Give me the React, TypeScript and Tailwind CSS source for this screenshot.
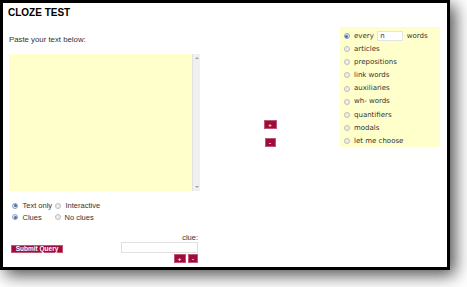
import React from "react";

function Radio({ on }: { on?: boolean }) {
  return (
    <span
      className={
        "relative inline-block w-[6px] h-[6px] shrink-0 rounded-full border " +
        (on ? "border-[#8da2c4] bg-[#e3e9f3]" : "border-[#bdbdbd] bg-[#ededed]")
      }
    >
      {on && <span className="absolute inset-[0.5px] rounded-full bg-[#4a6fa8]" />}
    </span>
  );
}

function RedBtn({ label, w }: { label: string; w: string }) {
  return (
    <button
      className={
        "flex items-center justify-center h-[9px] bg-[#9c0c3c] border border-[#c0566f] text-white text-[6px] leading-none font-bold p-0 " +
        w
      }
    >
      {label}
    </button>
  );
}

const options = [
  "articles",
  "prepositions",
  "link words",
  "auxiliaries",
  "wh- words",
  "quantifiers",
  "modals",
  "let me choose",
];

export default function App() {
  return (
    <div className="w-[467px] h-[287px] bg-white overflow-hidden">
      <div className="w-[450px] h-[270px] border-[3px] border-black bg-white shadow-[5px_5px_16px_rgba(0,0,0,0.7)] font-['Liberation_Sans',Arial,sans-serif] text-[#333]">
        {/* titulo */}
        <div className="pt-[4px] pl-[5px] h-[16px] text-[10px] leading-[12px] font-bold text-black">
          CLOZE TEST
        </div>

        <div className="flex items-start">
          {/* coluna esquerda */}
          <div className="ml-[6px] w-[191px] flex flex-col">
            <p className="mt-[16px] text-[7.8px] leading-[10px]">Paste your text below:</p>
            <div className="mt-[9px] h-[137px] flex">
              <textarea className="flex-1 h-full bg-[#ffffcc] resize-none outline-none border-0 overflow-hidden" />
              <div className="w-[8px] h-full bg-[#f0f0f0] border-l border-[#e2e2e2] flex flex-col items-center justify-between py-[3px]">
                <span className="w-0 h-0 border-l-[2px] border-r-[2px] border-b-[2px] border-l-transparent border-r-transparent border-b-[#a0a0a0]" />
                <span className="w-0 h-0 border-l-[2px] border-r-[2px] border-t-[2px] border-l-transparent border-r-transparent border-t-[#a0a0a0]" />
              </div>
            </div>

            <div className="mt-[9px] text-[7.5px]">
              <div className="flex items-center h-[11.5px] pl-[3px]">
                <div className="flex items-center w-[43px]">
                  <Radio on />
                  <span className="ml-[4.5px]">Text only</span>
                </div>
                <Radio />
                <span className="ml-[4.5px]">Interactive</span>
              </div>
              <div className="flex items-center h-[11.5px] pl-[3px]">
                <div className="flex items-center w-[43px]">
                  <Radio on />
                  <span className="ml-[4.5px]">Clues</span>
                </div>
                <Radio />
                <span className="ml-[3.5px]">No clues</span>
              </div>
            </div>

            <div className="mt-[11px] flex items-start justify-between">
              <button className="ml-[2px] mt-[11px] w-[52px] h-[8px] bg-[#9c0c3c] border border-[#c0566f] text-white text-[6.5px] leading-none font-bold p-0 flex items-center justify-center">
                Submit Query
              </button>
              <div className="mr-[2px] w-[77px] flex flex-col items-end">
                <span className="h-[8px] text-[7.5px] leading-[8px]">clue:</span>
                <input className="w-[77px] h-[11px] border border-[#e0e0e0] bg-white outline-none" />
                <div className="mt-[1px] flex gap-[2.5px]">
                  <RedBtn label="+" w="w-[12px]" />
                  <RedBtn label="-" w="w-[10px]" />
                </div>
              </div>
            </div>
          </div>

          {/* botões do meio */}
          <div className="flex-1 flex flex-col items-center pt-[101px] gap-[9px]">
            <RedBtn label="+" w="w-[13px]" />
            <RedBtn label="-" w="w-[11px]" />
          </div>

          {/* painel direito */}
          <div className="mt-[8px] mr-[7px] w-[100px] h-[120px] bg-[#ffffcc] pt-[2.5px] pl-[3.5px] font-['DejaVu_Sans',Verdana,sans-serif] text-[7px] text-[#333]">
            <div className="flex items-center h-[13.125px]">
              <Radio on />
              <span className="ml-[4.5px]">every</span>
              <input
                defaultValue="n"
                className="ml-[3.5px] w-[26px] h-[10px] border border-[#e4e4e4] bg-white px-[2px] text-[7px] leading-none outline-none"
              />
              <span className="ml-[3.5px]">words</span>
            </div>
            {options.map((o) => (
              <div key={o} className="flex items-center h-[13.125px]">
                <Radio />
                <span className="ml-[4.5px]">{o}</span>
              </div>
            ))}
          </div>
        </div>
      </div>
    </div>
  );
}
